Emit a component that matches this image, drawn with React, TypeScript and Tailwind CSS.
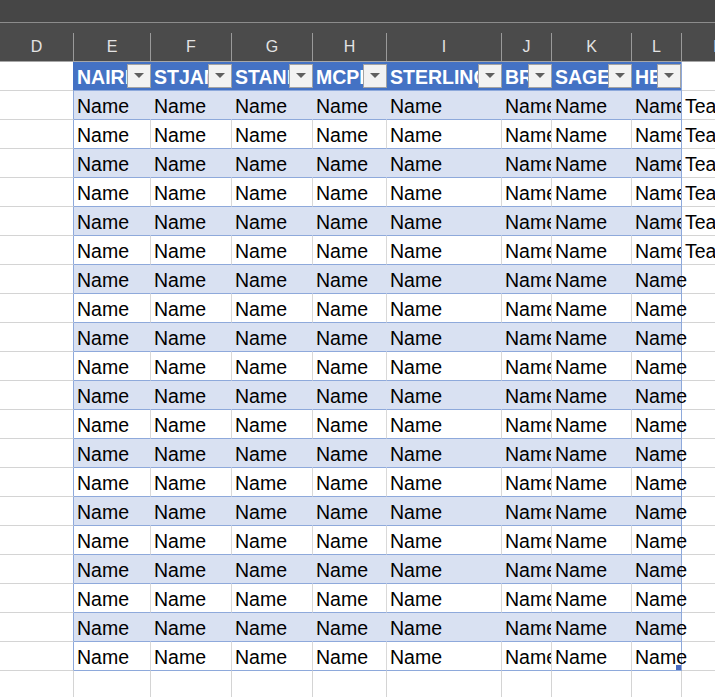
import React from "react";

type Col = { l: string; w: string };

const cols: Col[] = [
  { l: "D", w: "w-[74px]" },
  { l: "E", w: "w-[77px]" },
  { l: "F", w: "w-[81px]" },
  { l: "G", w: "w-[81px]" },
  { l: "H", w: "w-[74px]" },
  { l: "I", w: "w-[115px]" },
  { l: "J", w: "w-[50px]" },
  { l: "K", w: "w-[80px]" },
  { l: "L", w: "w-[50px]" },
  { l: "M", w: "w-[77px]" },
  { l: "N", w: "w-[64px]" },
];

const headers = ["NAIRN", "STJAMES", "STANLEY", "MCPHERSON", "STERLING", "BRIDGE", "SAGECREST", "HERITAGE"];

const font = { fontFamily: '"Liberation Sans", Arial, sans-serif' };

function FilterButton() {
  return (
    <div className="absolute right-0 top-[2px] w-[24px] h-[24px] bg-[#f2f2f2] border border-[#a3a3a3] flex items-center justify-center">
      <svg width="10" height="6" viewBox="0 0 10 6">
        <path d="M0 0 L10 0 L5 5 Z" fill="#5f5f5f" />
      </svg>
    </div>
  );
}

function HeaderRow() {
  return (
    <div className="flex h-[29px]">
      {cols.map((c, i) => {
        if (i === 0) {
          return <div key={c.l} className={`${c.w} shrink-0 h-[29px] bg-white border-r border-b border-r-[#4472c4] border-b-[#d4d4d4]`} />;
        }
        if (i >= 1 && i <= 8) {
          return (
            <div
              key={c.l}
              className={`${c.w} shrink-0 h-[29px] bg-[#4472c4] border-b border-b-[#8ea9db] ${i === 8 ? "border-r border-r-[#8ea9db]" : ""} relative overflow-hidden pl-[3px] leading-[30px] text-[19.5px] font-bold text-white whitespace-nowrap`}
            >
              {headers[i - 1]}
              <FilterButton />
            </div>
          );
        }
        return <div key={c.l} className={`${c.w} shrink-0 h-[29px] bg-white border-r border-b border-[#d4d4d4]`} />;
      })}
    </div>
  );
}

function DataRow({ idx }: { idx: number }) {
  const band = idx % 2 === 0;
  const hasTeam = idx < 6;
  return (
    <div className="flex h-[29px]">
      {cols.map((c, i) => {
        if (i === 0) {
          return <div key={c.l} className={`${c.w} shrink-0 h-[29px] bg-white border-r border-b border-r-[#8ea9db] border-b-[#d4d4d4]`} />;
        }
        if (i >= 1 && i <= 8) {
          const isLast = i === 8;
          const overflow = isLast && !hasTeam;
          return (
            <div
              key={c.l}
              className={`${c.w} shrink-0 h-[29px] border-b border-r border-b-[#8ea9db] ${
                isLast ? "border-r-[#8ea9db]" : band ? "border-r-[#d9e1f2]" : "border-r-[#d9d9d9]"
              } ${band ? "bg-[#d9e1f2]" : "bg-white"} ${overflow ? "overflow-visible relative z-10" : "overflow-hidden"} pl-[3px] leading-[30px] text-[19.5px] text-black whitespace-nowrap`}
            >
              Name
            </div>
          );
        }
        return (
          <div
            key={c.l}
            className={`${c.w} shrink-0 h-[29px] bg-white border-r border-b border-[#d4d4d4] overflow-hidden pl-[3px] leading-[30px] text-[19.5px] text-black whitespace-nowrap`}
          >
            {i === 9 && hasTeam ? "Team" : ""}
          </div>
        );
      })}
    </div>
  );
}

function EmptyRow() {
  return (
    <div className="flex h-[29px]">
      {cols.map((c) => (
        <div key={c.l} className={`${c.w} shrink-0 h-[29px] bg-white border-r border-b border-[#d4d4d4]`} />
      ))}
    </div>
  );
}

export default function App() {
  return (
    <div className="w-[715px] h-[697px] overflow-hidden relative bg-white" style={font}>
      <div className="h-[23px] bg-[#464646] border-b border-[#8c8c8c]" />
      <div className="h-[10px] bg-[#4b4b4b]" />
      <div className="flex h-[29px] bg-[#4b4b4b] border-b border-[#a6a6a6]">
        {cols.map((c) => (
          <div
            key={c.l}
            className={`${c.w} shrink-0 h-[28px] border-r border-[#9a9a9a] text-center leading-[28px] text-[16px] text-[#e3e3e3]`}
          >
            {c.l}
          </div>
        ))}
      </div>
      <HeaderRow />
      {Array.from({ length: 20 }).map((_, i) => (
        <DataRow key={i} idx={i} />
      ))}
      <EmptyRow />
      <div className="absolute left-[676px] top-[665px] w-[5px] h-[5px] bg-[#4a6bbf] z-20" />
    </div>
  );
}
